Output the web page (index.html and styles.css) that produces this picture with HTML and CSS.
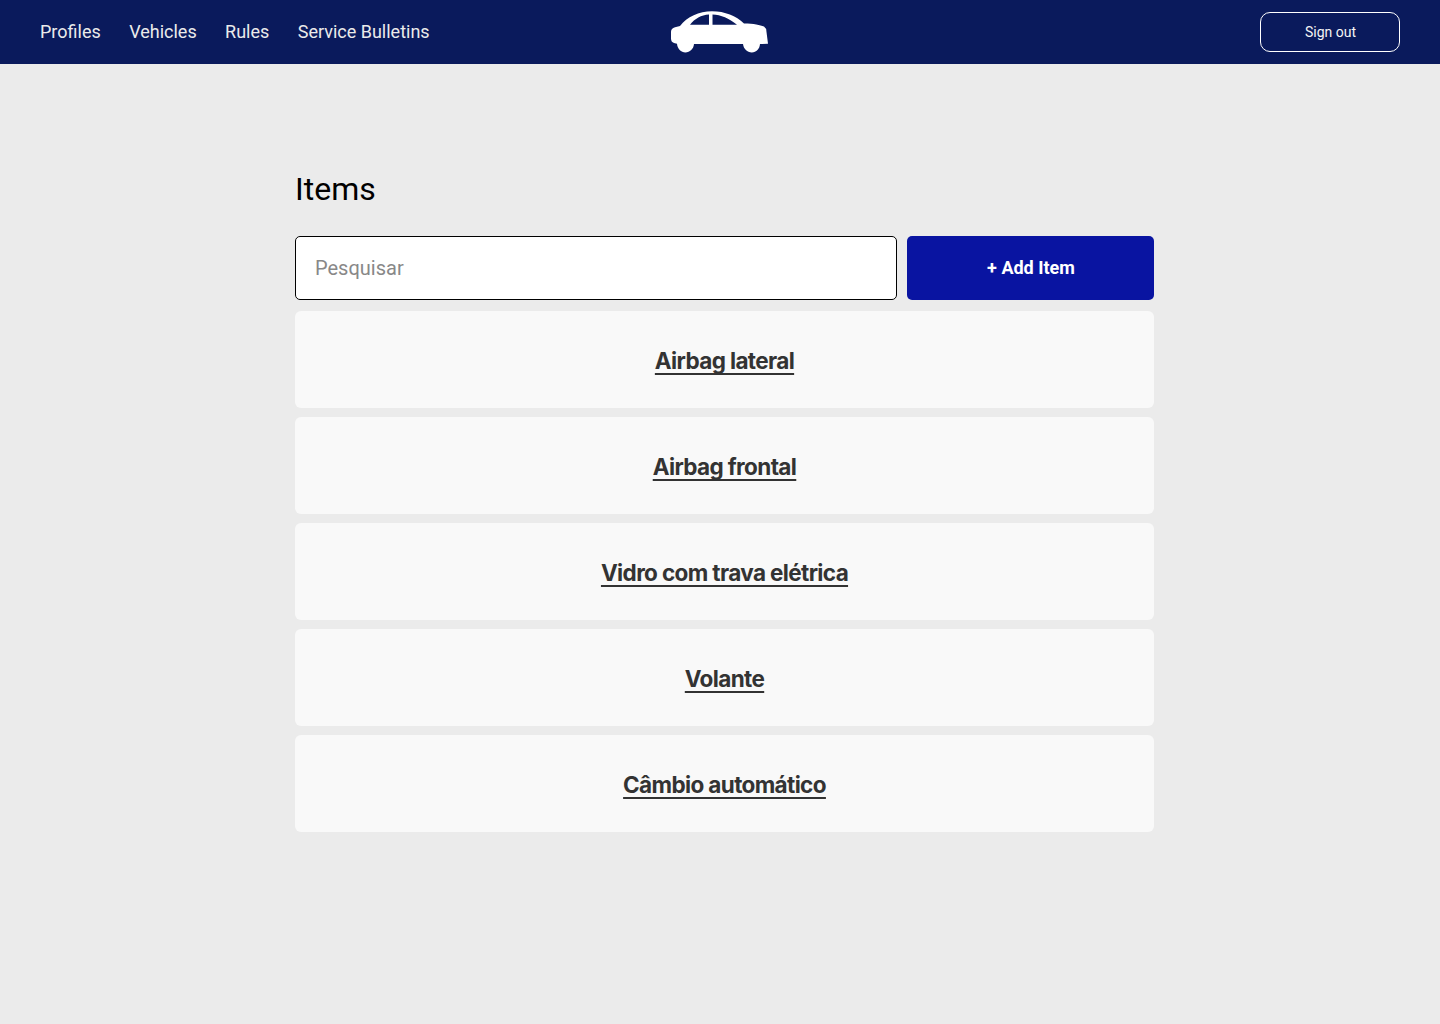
FILE: index.html
```html
<!DOCTYPE html>
<html lang="en">
<head>
<meta charset="utf-8">
<title>Items</title>
<link rel="stylesheet" href="styles.css">
</head>
<body>
<header class="topbar">
  <nav class="nav">
    <a href="#">Profiles</a>
    <a href="#">Vehicles</a>
    <a href="#">Rules</a>
    <a href="#">Service Bulletins</a>
  </nav>
  <svg class="logo" viewBox="0 0 98 44" width="98" height="44" aria-label="Car">
    <path fill="#fff" fill-rule="evenodd" d="M5 17.3 L10 16 C17 7 29 1.3 42 1.3 C55 1.3 66 6 74 13.4 C84 13.6 90 14.7 94 16.6 Q96.3 18 96.5 22 L98 33.8 L90 34 C89.6 39 86.4 42.4 81.8 42.4 C77.2 42.4 73.6 39 73 34 L24 34 C23.6 39 19.8 42.4 15.4 42.4 C11 42.4 7.5 39 7 33.7 L4 33 Q1 32 1 28.5 L1 22 Q1 18.5 5 17.3 Z M20 14.7 L39 14.7 L39 4.5 C31 5 25 8.6 20 14.7 Z M42.5 14.7 L67 14.7 C59 8.3 51 4.8 42.5 4.5 Z"/>
  </svg>
  <button class="signout" type="button">Sign out</button>
</header>
<main class="content">
  <h1 class="title">Items</h1>
  <div class="toolbar">
    <input class="search" type="text" placeholder="Pesquisar">
    <button class="add" type="button">+ Add Item</button>
  </div>
  <ul class="list">
    <li class="card"><a href="#">Airbag lateral</a></li>
    <li class="card"><a href="#">Airbag frontal</a></li>
    <li class="card"><a href="#">Vidro com trava elétrica</a></li>
    <li class="card"><a href="#">Volante</a></li>
    <li class="card"><a href="#">Câmbio automático</a></li>
  </ul>
</main>
</body>
</html>
```
FILE: styles.css
```css
* {
  box-sizing: border-box;
}

body {
  margin: 0;
  background: #ebebeb;
  font-family: Roboto, sans-serif;
}

.topbar {
  display: grid;
  grid-template-columns: 1fr 98px 1fr;
  align-items: center;
  height: 64px;
  padding: 0 40px;
  background: #0a1a5c;
}

.nav {
  display: flex;
  gap: 28.4px;
  font-size: 18px;
  line-height: 24px;
}

.nav a {
  color: #ebebeb;
  text-decoration: none;
  white-space: nowrap;
}

.logo {
  display: block;
  margin: 0 0 0 -1px;
}

.signout {
  justify-self: end;
  width: 140px;
  height: 40px;
  padding: 0 0 0 1px;
  border: 1px solid #fff;
  border-radius: 10px;
  background: transparent;
  color: #f5f5f5;
  font: 14px Roboto, sans-serif;
}

.content {
  width: 859px;
  margin: 0 0 0 295px;
  padding-top: 105px;
}

.title {
  margin: 0;
  color: #000;
  font-size: 32px;
  font-weight: 400;
  line-height: 40px;
}

.toolbar {
  display: flex;
  gap: 10px;
  margin-top: 27px;
}

.search {
  width: 602px;
  height: 64px;
  padding: 0 19px;
  border: 1px solid #000;
  border-radius: 5px;
  background: #fff;
  font: 20px Roboto, sans-serif;
}

.search::placeholder {
  color: #888;
}

.add {
  width: 247px;
  height: 64px;
  padding: 0 0 1px 1px;
  border: 0;
  border-radius: 5px;
  background: #0914a1;
  color: #fff;
  font: bold 18px Roboto, sans-serif;
}

.list {
  display: flex;
  flex-direction: column;
  gap: 9px;
  margin: 11px 0 0;
  padding: 0;
  list-style: none;
}

.card {
  display: flex;
  align-items: center;
  justify-content: center;
  height: 97px;
  padding-top: 2px;
  border-radius: 6px;
  background: #f9f9f9;
}

.card a {
  color: #333;
  font: 700 22.5px/28px Inter, sans-serif;
  letter-spacing: -0.63px;
  text-decoration: underline;
  text-decoration-skip-ink: none;
  text-decoration-thickness: 1.5px;
  text-underline-offset: 4px;
}
```
